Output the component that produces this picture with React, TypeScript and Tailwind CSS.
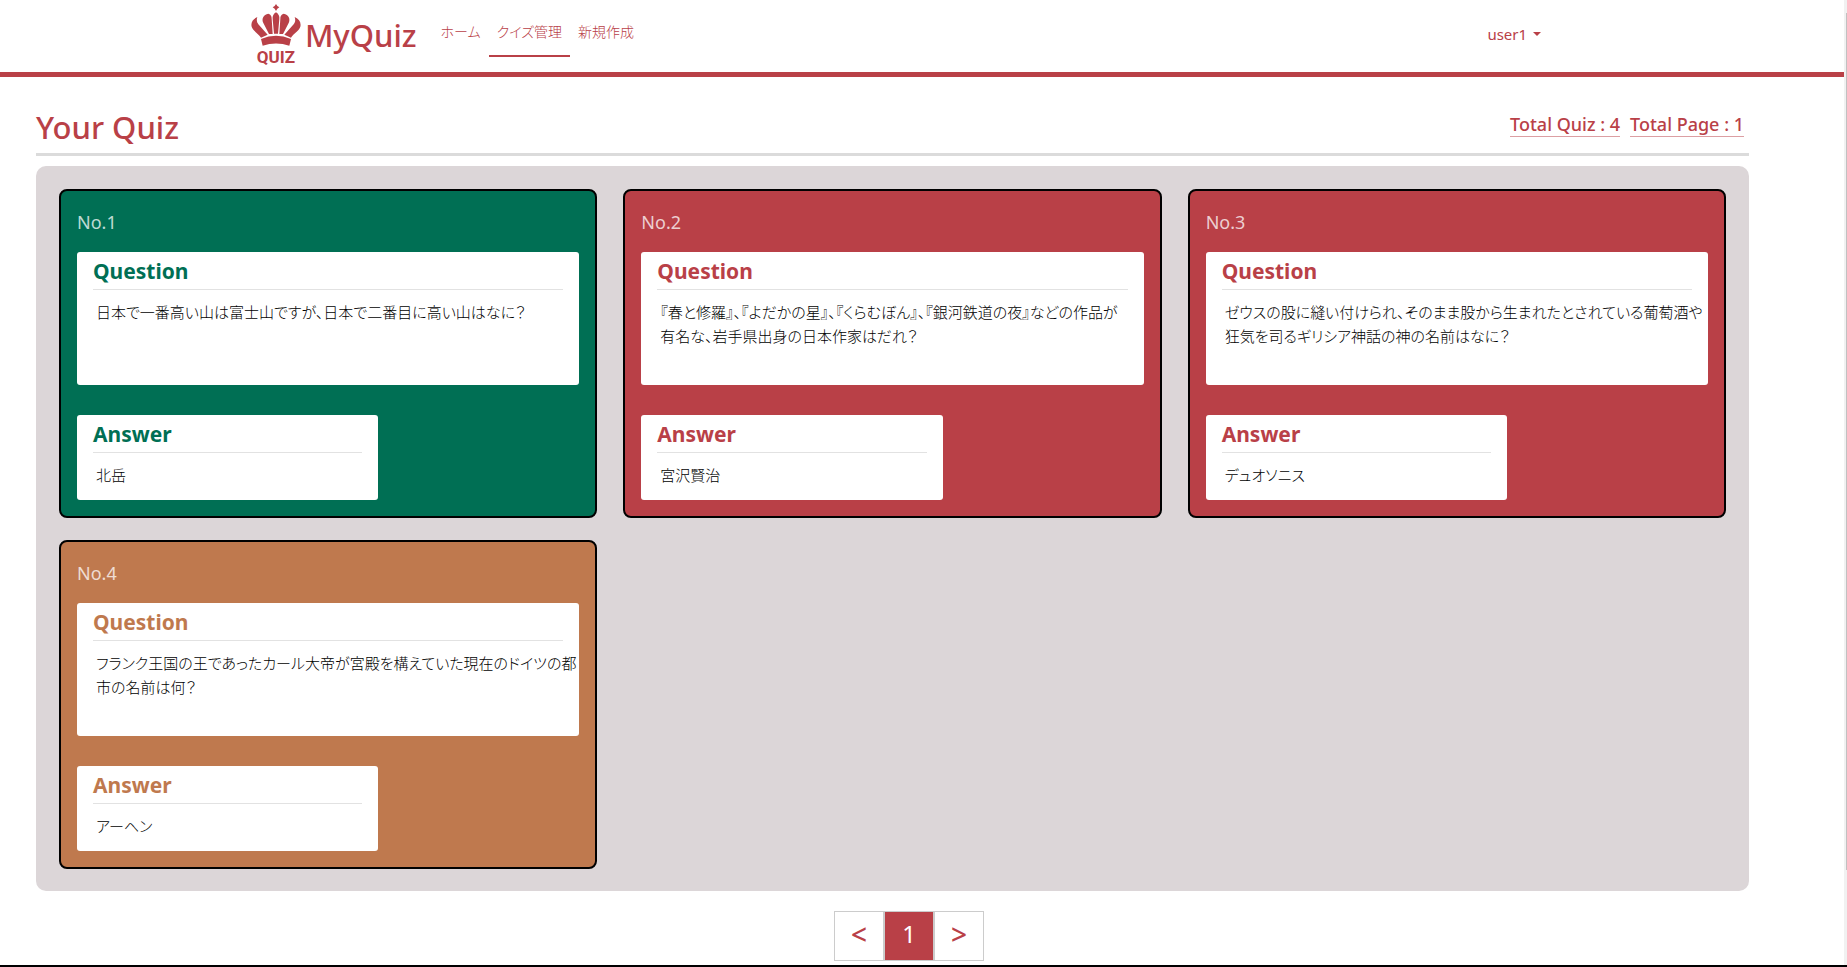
import React from "react";

type Quiz = {
  no: number;
  question: string;
  answer: string;
  cardClass: string;
  titleClass: string;
};

const quizzes: Quiz[] = [
  {
    no: 1,
    question: "日本で一番高い山は富士山ですが、日本で二番目に高い山はなに？",
    answer: "北岳",
    cardClass: "bg-[#006f54]",
    titleClass: "text-[#006f54]",
  },
  {
    no: 2,
    question:
      "『春と修羅』、『よだかの星』、『くらむぼん』、『銀河鉄道の夜』などの作品が\n有名な、岩手県出身の日本作家はだれ？",
    answer: "宮沢賢治",
    cardClass: "bg-[#b94047]",
    titleClass: "text-[#b94047]",
  },
  {
    no: 3,
    question:
      "ゼウスの股に縫い付けられ、そのまま股から生まれたとされている葡萄酒や\n狂気を司るギリシア神話の神の名前はなに？",
    answer: "デュオソニス",
    cardClass: "bg-[#b94047]",
    titleClass: "text-[#b94047]",
  },
  {
    no: 4,
    question:
      "フランク王国の王であったカール大帝が宮殿を構えていた現在のドイツの都\n市の名前は何？",
    answer: "アーヘン",
    cardClass: "bg-[#bf794e]",
    titleClass: "text-[#bf794e]",
  },
];

function Crown() {
  return (
    <svg viewBox="8 11 150 126" className="h-[42px] w-[50px]" fill="currentColor" aria-hidden="true">
      <path d="M83 11l4 6 6 4-6 4-4 7-4-7-6-4 6-4z" />
      <path d="M83 36c8 5 11 12 10 20l-4 44H77l-4-44c-1-8 2-15 10-20z" />
      <path d="M60 40c8 2 10 8 10 15l3 46H62L45 68c-6-13 0-25 15-28z" />
      <path d="M106 40c-8 2-10 8-10 15l-3 46h11l17-33c6-13 0-25-15-28z" />
      <path d="M27 50C13 56 7 67 10 79c4 13 20 20 28 33l20-9-28-31c-5-7-6-14-3-22z" />
      <path d="M139 50c14 6 20 17 17 29-4 13-20 20-28 33l-20-9 28-31c5-7 6-14 3-22z" />
      <path d="M38 116q45-20 90 0l-5 20q-40-13-80 0z" />
    </svg>
  );
}

function Panel({ title, text, titleClass, sizeClass }: { title: string; text: string; titleClass: string; sizeClass: string }) {
  return (
    <section className={`rounded-[3px] bg-white pl-4 ${sizeClass}`}>
      <h3 className={`mr-4 border-b border-[#e2e2e2] pt-[5px] pb-[3px] text-[21px] leading-[29px] font-bold ${titleClass}`}>{title}</h3>
      <p className="pt-2.5 pl-[3px] text-[15px] leading-6 font-light whitespace-pre-line text-black [font-feature-settings:'palt','kern']">{text}</p>
    </section>
  );
}

function QuizCard({ quiz }: { quiz: Quiz }) {
  return (
    <article className={`rounded-lg border-2 border-black px-4 pb-4 ${quiz.cardClass}`}>
      <p className="pt-[17px] pb-[15px] text-lg leading-[29px] text-white/75">No.{quiz.no}</p>
      <Panel title="Question" text={quiz.question} titleClass={quiz.titleClass} sizeClass="min-h-[133px]" />
      <Panel title="Answer" text={quiz.answer} titleClass={quiz.titleClass} sizeClass="mt-[30px] min-h-[85px] w-3/5" />
    </article>
  );
}

export default function App() {
  return (
    <div className="flex h-screen flex-col overflow-hidden border-b-2 border-black bg-white font-['Noto_Sans','Noto_Sans_CJK_JP',sans-serif] text-[#b94047]">
      <div className="flex min-h-0 flex-1">
        <div className="min-w-0 flex-1">
          <header className="border-b-[5px] border-[#b94047] pr-[52px]">
            <div className="mx-auto flex h-[72px] w-[72%] items-center justify-between">
              <div className="flex items-center">
                <a href="#" className="flex items-center gap-1 pr-4 pb-[3px]">
                  <span className="flex flex-col items-center gap-[3px]">
                    <Crown />
                    <span className="font-['Roboto',sans-serif] text-[17px] leading-[16px] font-bold">QUIZ</span>
                  </span>
                  <span className="text-[31px] leading-10 font-medium">MyQuiz</span>
                </a>
                <nav className="flex text-[14px] leading-6 font-light [font-feature-settings:'palt','kern']">
                  <a href="#" className="px-2 pt-[5px] pb-[11px]">ホーム</a>
                  <a href="#" aria-current="page" className="border-b-2 border-[#b94047] px-2 pt-[5px] pb-[11px]">クイズ管理</a>
                  <a href="#" className="px-2 pt-[5px] pb-[11px]">新規作成</a>
                </nav>
              </div>
              <button type="button" className="flex items-center gap-1.5 pb-1 text-[15px] leading-6">
                user1
                <svg viewBox="0 0 8 4" className="h-1 w-2" fill="currentColor" aria-hidden="true">
                  <path d="M0 0h8L4 4z" />
                </svg>
              </button>
            </div>
          </header>

          <main className="mr-[95px] ml-9">
            <div className="flex h-[79px] items-center justify-between border-b-[3px] border-[#dbdbdb] pt-6">
              <h1 className="text-[31px] leading-10 font-medium">Your Quiz</h1>
              <div className="flex gap-2.5 pr-[5px] pb-1.5 text-lg leading-6 font-medium">
                <p className="border-b border-[#dc9fa3]">Total Quiz : 4</p>
                <p className="border-b border-[#dc9fa3]">Total Page : 1</p>
              </div>
            </div>

            <div className="mt-2.5 grid grid-cols-3 gap-x-[26px] gap-y-[22px] rounded-[10px] bg-[#dcd6d8] px-[23px] pt-[23px] pb-[22px]">
              {quizzes.map((quiz) => (
                <QuizCard key={quiz.no} quiz={quiz} />
              ))}
            </div>

            <nav aria-label="Pagination" className="mt-5 flex justify-center pl-[33px] text-2xl">
              <a href="#" aria-label="Previous" className="flex size-[50px] items-center justify-center border border-[#ccc] pb-0.5 text-[28px] font-medium">&lt;</a>
              <a href="#" aria-current="page" className="flex size-[50px] items-center justify-center border border-[#ccc] bg-[#b94047] pb-1 text-white">1</a>
              <a href="#" aria-label="Next" className="flex size-[50px] items-center justify-center border border-[#ccc] pb-0.5 text-[28px] font-medium">&gt;</a>
            </nav>
          </main>
        </div>
        <div className="w-[3px] bg-[#f1f1f1] pt-[13px] pl-0.5" aria-hidden="true">
          <div className="h-9/10 bg-[#c1c1c1]" />
        </div>
      </div>
    </div>
  );
}
